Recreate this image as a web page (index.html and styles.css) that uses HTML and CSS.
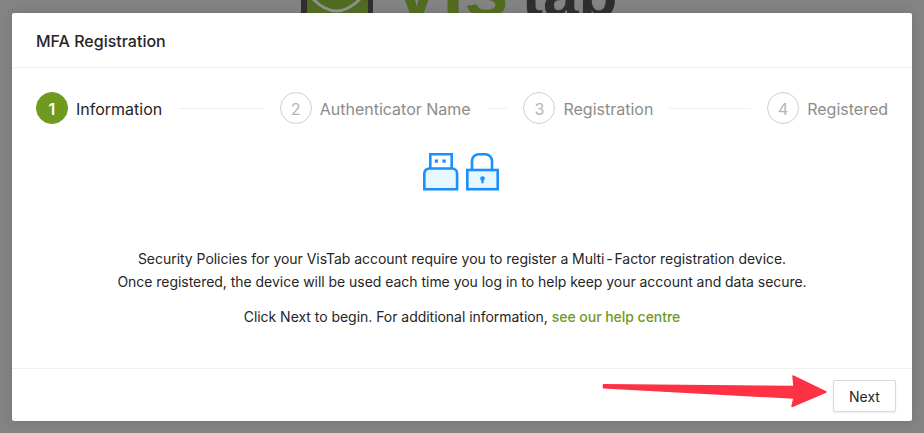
FILE: index.html
```html
<!DOCTYPE html>
<html lang="en">
<head>
  <meta charset="UTF-8" />
  <title>MFA Registration</title>
  <link rel="stylesheet" href="styles.css">
</head>
<body>
  <div class="backdrop-logo">
    <svg class="logo-mark" width="72" height="13" viewBox="0 0 72 13">
      <rect x="0" y="0" width="72" height="13" fill="#2e2e2e"/>
      <rect x="6" y="0" width="61" height="13" fill="#506a20"/>
      <path d="M12 -1 Q35.500 23 59 -1" fill="none" stroke="#8f8f8f" stroke-width="3"/>
    </svg>
    <span class="logo-text"><span class="logo-green">Vis</span>tab</span>
  </div>

  <div class="modal">
    <div class="modal-header">MFA Registration</div>

    <div class="modal-body">
      <div class="steps">
        <div class="step active">
          <span class="step-num">1</span><span class="step-name">Information</span>
          <div class="step-line"></div>
        </div>
        <div class="step">
          <span class="step-num">2</span><span class="step-name">Authenticator Name</span>
          <div class="step-line"></div>
        </div>
        <div class="step">
          <span class="step-num">3</span><span class="step-name">Registration</span>
          <div class="step-line"></div>
        </div>
        <div class="step last">
          <span class="step-num">4</span><span class="step-name">Registered</span>
        </div>
      </div>

      <div class="icon-row">
        <svg width="78" height="40" viewBox="0 0 78 40" fill="none" stroke="#1890ff" stroke-width="2.6">
          <path d="M7.300 17V2.300h21.400V17" fill="#fff"/>
          <rect x="11.800" y="7.500" width="3.200" height="3.200" fill="#1890ff" stroke="none"/>
          <rect x="19.500" y="7.500" width="3.200" height="3.200" fill="#1890ff" stroke="none"/>
          <path d="M1.300 37.200V21.500a5 5 0 0 1 5-5h22.800a5 5 0 0 1 5 5v15.700z" fill="#e6f7ff"/>
          <path d="M49 18V9a6.800 6.800 0 0 1 6.800-6.800h6.400a6.800 6.800 0 0 1 6.800 6.800V18" />
          <rect x="44.300" y="18" width="30.400" height="19.200" fill="#e6f7ff"/>
          <circle cx="59.500" cy="26.500" r="2.300" fill="#1890ff" stroke="none"/>
          <rect x="58.400" y="26.500" width="2.200" height="4.800" fill="#1890ff" stroke="none"/>
        </svg>
      </div>

      <div class="info">
        <p>Security Policies for your VisTab account require you to register a Multi<span class="hyphen">-</span>Factor registration device.<br>Once registered, the device will be used each time you log in to help keep your account and data secure.</p>
        <p>Click Next to begin. For additional information, <a href="#">see our help centre</a></p>
      </div>
    </div>

    <div class="modal-footer">
      <button class="btn">Next</button>
    </div>
  </div>

  <svg class="arrow" width="232" height="40" viewBox="0 0 232 40">
    <path d="M1.500 10.800 L192 12.500 L191 2 L224 18 L190 32.500 L192 24 L1.500 13.800 Z" fill="#fe3244" stroke="#fe3244" stroke-width="1.500" stroke-linejoin="round"/>
  </svg>
</body>
</html>
```

FILE: styles.css
```css
html, body {
  margin: 0;
  height: 433px;
  overflow: hidden;
}
body {
  font-family: Inter, "Liberation Sans", sans-serif;
  background: #838383;
  color: #262626;
  padding: 13px 12px 12px;
  box-sizing: border-box;
}
.backdrop-logo {
  position: absolute;
  top: 0;
  left: 301px;
  height: 13px;
  display: flex;
  overflow: hidden;
}
.logo-mark {
  display: block;
}
.logo-text {
  margin-left: 17px;
  margin-top: -47px;
  font-family: "Liberation Sans", sans-serif;
  font-size: 64px;
  font-weight: 700;
  line-height: 72px;
  color: #2e2e2e;
}
.logo-green {
  color: #506a20;
  font-size: 80px;
  margin-right: 13px;
}
.modal {
  background: white;
  height: 408px;
  border-radius: 2px;
  box-shadow: 0 0 10px rgba(0, 0, 0, 0.12);
  display: flex;
  flex-direction: column;
}
.modal-header {
  height: 53px;
  padding: 1px 24px 0;
  line-height: 54px;
  font-size: 16px;
  font-weight: 500;
  border-bottom: 1px solid #f0f0f0;
}
.modal-body {
  flex: 1;
  padding: 24px 24px 0;
}
.steps {
  display: flex;
  align-items: center;
  height: 32px;
}
.step {
  flex: 1;
  display: flex;
  align-items: center;
  font-size: 16px;
  color: #8c8c8c;
}
.step.last {
  flex: none;
}
.step-num {
  width: 32px;
  height: 32px;
  margin-right: 8px;
  padding-top: 1px;
  box-sizing: border-box;
  border: 1px solid #d0d0d0;
  border-radius: 50%;
  display: flex;
  align-items: center;
  justify-content: center;
  color: #b5b5b5;
}
.step-name {
  padding-top: 1px;
}
.step.active {
  color: #262626;
}
.step.active .step-num {
  background: #6f9a1f;
  border-color: #6f9a1f;
  color: white;
  font-weight: 600;
}
.step-line {
  flex: 1;
  height: 1px;
  background: #f0f0f0;
  margin: 0 16px;
}
.icon-row {
  display: flex;
  justify-content: center;
  margin-top: 28px;
}
.info {
  margin-top: 55px;
  text-align: center;
  font-size: 14px;
  line-height: 23px;
  letter-spacing: -0.035px;
  color: #262626;
}
.info p {
  margin: 0 0 12px;
}
.info a {
  color: #6f9a1f;
  font-weight: 500;
  text-decoration: none;
}
.hyphen {
  margin: 0 1.800px;
}
.modal-footer {
  height: 53px;
  border-top: 1px solid #f0f0f0;
  padding: 11px 16px;
  box-sizing: border-box;
  display: flex;
  justify-content: flex-end;
  align-items: flex-start;
}
.btn {
  width: 63px;
  height: 32px;
  background: white;
  border: 1px solid #d9d9d9;
  border-radius: 2px;
  box-shadow: 0 1px 2px rgba(0, 0, 0, 0.08);
  font-family: inherit;
  font-size: 14px;
  color: #262626;
}
.arrow {
  position: absolute;
  left: 602px;
  top: 374px;
}
```
